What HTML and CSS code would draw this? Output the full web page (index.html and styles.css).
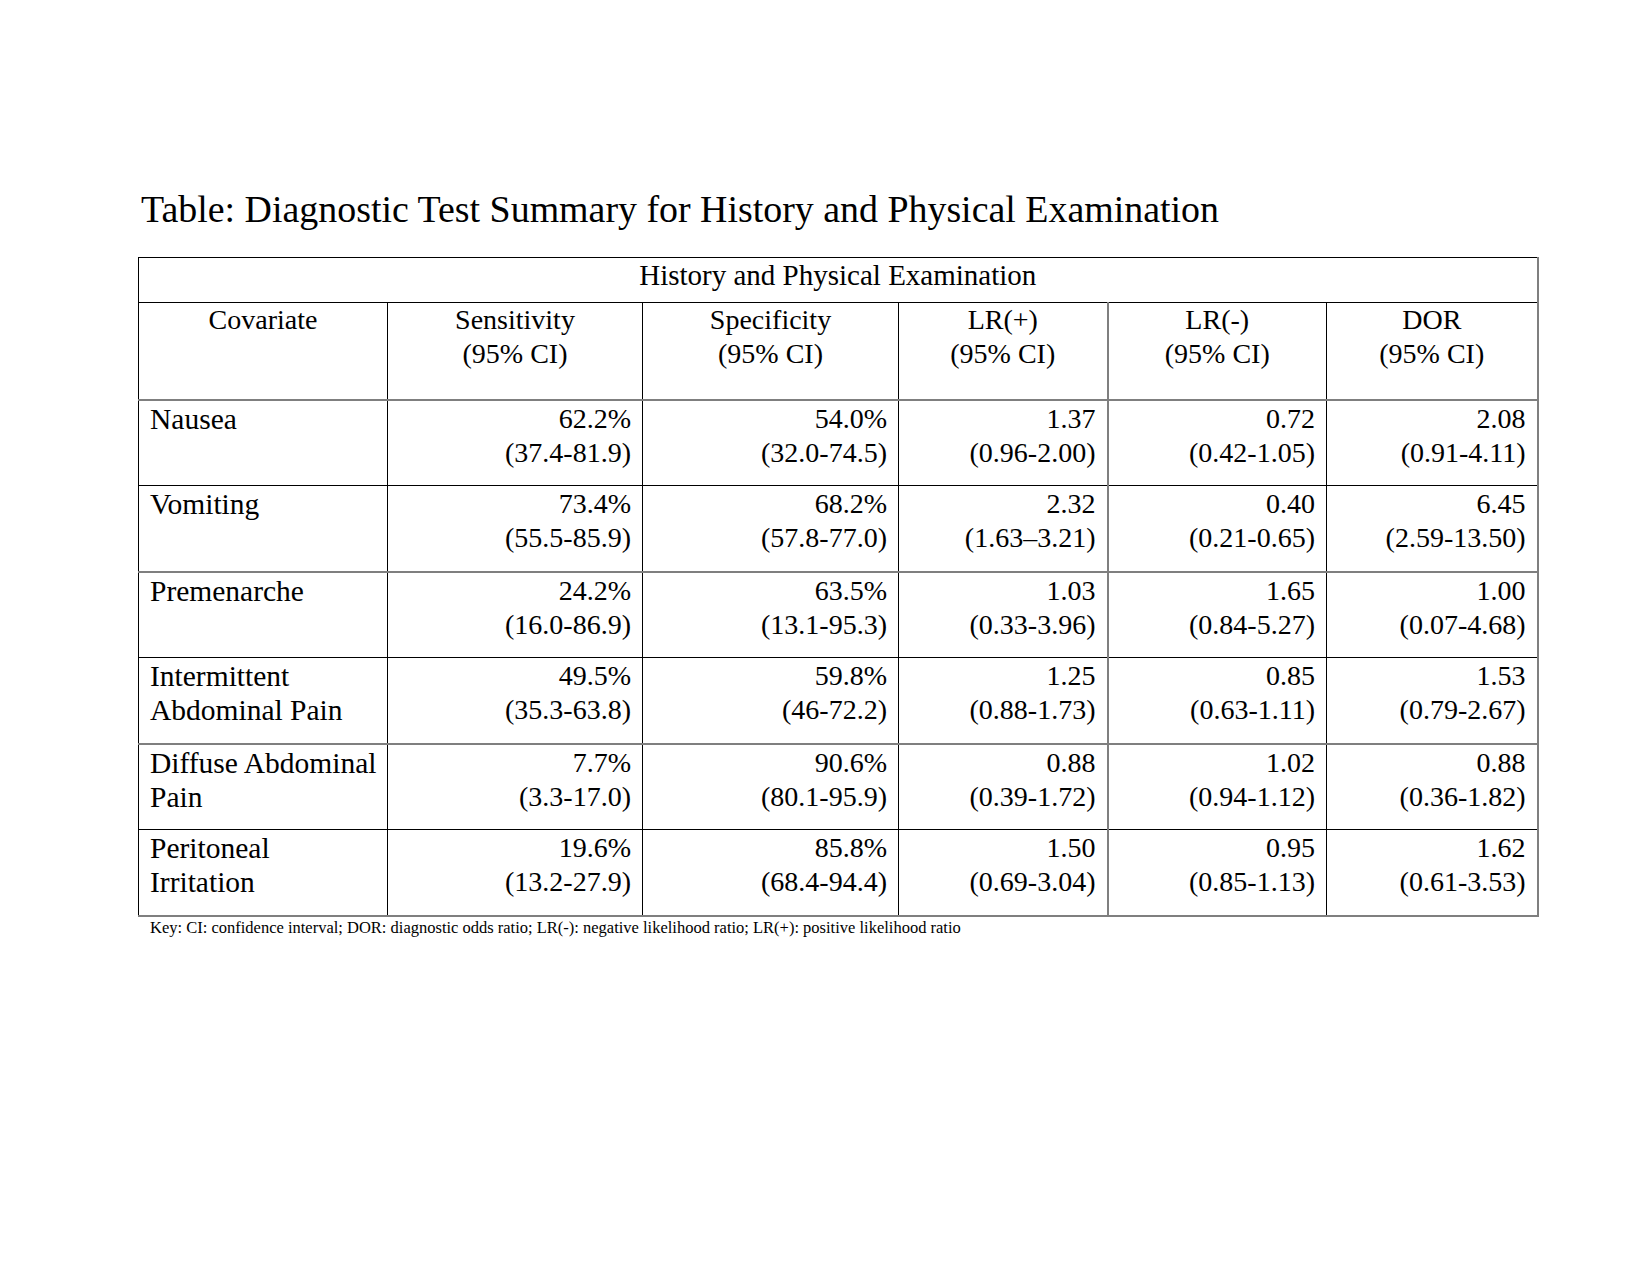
FILE: index.html
```html
<!DOCTYPE html>
<html lang="en">
<head>
<meta charset="utf-8">
<title>Diagnostic Test Summary</title>
<link rel="stylesheet" href="styles.css">
</head>
<body>
<main class="page">
  <h1 class="title">Table: Diagnostic Test Summary for History and Physical Examination</h1>
  <table class="summary">
    <colgroup>
      <col class="c-cov"><col class="c-sens"><col class="c-spec"><col class="c-lrp"><col class="c-lrn"><col class="c-dor">
    </colgroup>
    <thead>
      <tr class="group-row"><th colspan="6">History and Physical Examination</th></tr>
      <tr class="head-row">
        <th>Covariate</th>
        <th>Sensitivity<br>(95% CI)</th>
        <th>Specificity<br>(95% CI)</th>
        <th class="gray-r">LR(+)<br>(95% CI)</th>
        <th>LR(-)<br>(95% CI)</th>
        <th>DOR<br>(95% CI)</th>
      </tr>
    </thead>
    <tbody>
      <tr class="gray-t">
        <td class="cov">Nausea</td>
        <td>62.2%<br>(37.4-81.9)</td>
        <td>54.0%<br>(32.0-74.5)</td>
        <td class="gray-r">1.37<br>(0.96-2.00)</td>
        <td>0.72<br>(0.42-1.05)</td>
        <td>2.08<br>(0.91-4.11)</td>
      </tr>
      <tr>
        <td class="cov">Vomiting</td>
        <td>73.4%<br>(55.5-85.9)</td>
        <td>68.2%<br>(57.8-77.0)</td>
        <td class="gray-r">2.32<br>(1.63–3.21)</td>
        <td>0.40<br>(0.21-0.65)</td>
        <td>6.45<br>(2.59-13.50)</td>
      </tr>
      <tr class="gray-t">
        <td class="cov">Premenarche</td>
        <td>24.2%<br>(16.0-86.9)</td>
        <td>63.5%<br>(13.1-95.3)</td>
        <td class="gray-r">1.03<br>(0.33-3.96)</td>
        <td>1.65<br>(0.84-5.27)</td>
        <td>1.00<br>(0.07-4.68)</td>
      </tr>
      <tr>
        <td class="cov">Intermittent<br>Abdominal Pain</td>
        <td>49.5%<br>(35.3-63.8)</td>
        <td>59.8%<br>(46-72.2)</td>
        <td class="gray-r">1.25<br>(0.88-1.73)</td>
        <td>0.85<br>(0.63-1.11)</td>
        <td>1.53<br>(0.79-2.67)</td>
      </tr>
      <tr class="gray-t">
        <td class="cov">Diffuse Abdominal<br>Pain</td>
        <td>7.7%<br>(3.3-17.0)</td>
        <td>90.6%<br>(80.1-95.9)</td>
        <td class="gray-r">0.88<br>(0.39-1.72)</td>
        <td>1.02<br>(0.94-1.12)</td>
        <td>0.88<br>(0.36-1.82)</td>
      </tr>
      <tr class="last">
        <td class="cov">Peritoneal<br>Irritation</td>
        <td>19.6%<br>(13.2-27.9)</td>
        <td>85.8%<br>(68.4-94.4)</td>
        <td class="gray-r">1.50<br>(0.69-3.04)</td>
        <td>0.95<br>(0.85-1.13)</td>
        <td>1.62<br>(0.61-3.53)</td>
      </tr>
    </tbody>
  </table>
  <p class="key">Key: CI: confidence interval; DOR: diagnostic odds ratio; LR(-): negative likelihood ratio; LR(+): positive likelihood ratio</p>
</main>
</body>
</html>
```

FILE: styles.css
```css
html, body {
  margin: 0;
  padding: 0;
  background: #ffffff;
}

.page {
  padding: 188px 0 0 138px;
  font-family: "Liberation Serif", "Times New Roman", serif;
  color: #000;
}

.title {
  margin: 0 0 26px 3px;
  font-size: 37.9px;
  font-weight: normal;
  line-height: 43px;
}

.summary {
  border-collapse: collapse;
  table-layout: fixed;
  width: 1399px;
  font-size: 28px;
  line-height: 34px;
}

.c-cov { width: 249px; }
.c-sens { width: 255px; }
.c-spec { width: 256px; }
.c-lrp { width: 209px; }
.c-lrn { width: 219px; }
.c-dor { width: 211px; }

.summary th,
.summary td {
  border: 1px solid #000;
  vertical-align: top;
  padding: 0;
}

.summary th {
  font-weight: normal;
  text-align: center;
}

.group-row th {
  height: 45px;
  padding-top: 0;
  box-sizing: border-box;
  font-size: 29px;
}

.head-row th {
  height: 97px;
  padding-top: 0;
  box-sizing: border-box;
}

.summary td {
  height: 86px;
  box-sizing: border-box;
  padding: 1px 11px 0 11px;
  text-align: right;
}

.summary td.cov {
  text-align: left;
  padding: 1px 0 0 11px;
  font-size: 29.5px;
  white-space: nowrap;
}

.gray-t td {
  border-top: 2px solid #7f7f7f;
}

.gray-r {
  border-right: 2px solid #7f7f7f !important;
}

.summary th:last-child,
.summary td:last-child {
  border-right: 2px solid #7f7f7f;
}

.last td {
  border-bottom: 2px solid #7f7f7f;
}

.key {
  margin: 0 0 0 12px;
  font-size: 16.5px;
  line-height: 22px;
}
```
